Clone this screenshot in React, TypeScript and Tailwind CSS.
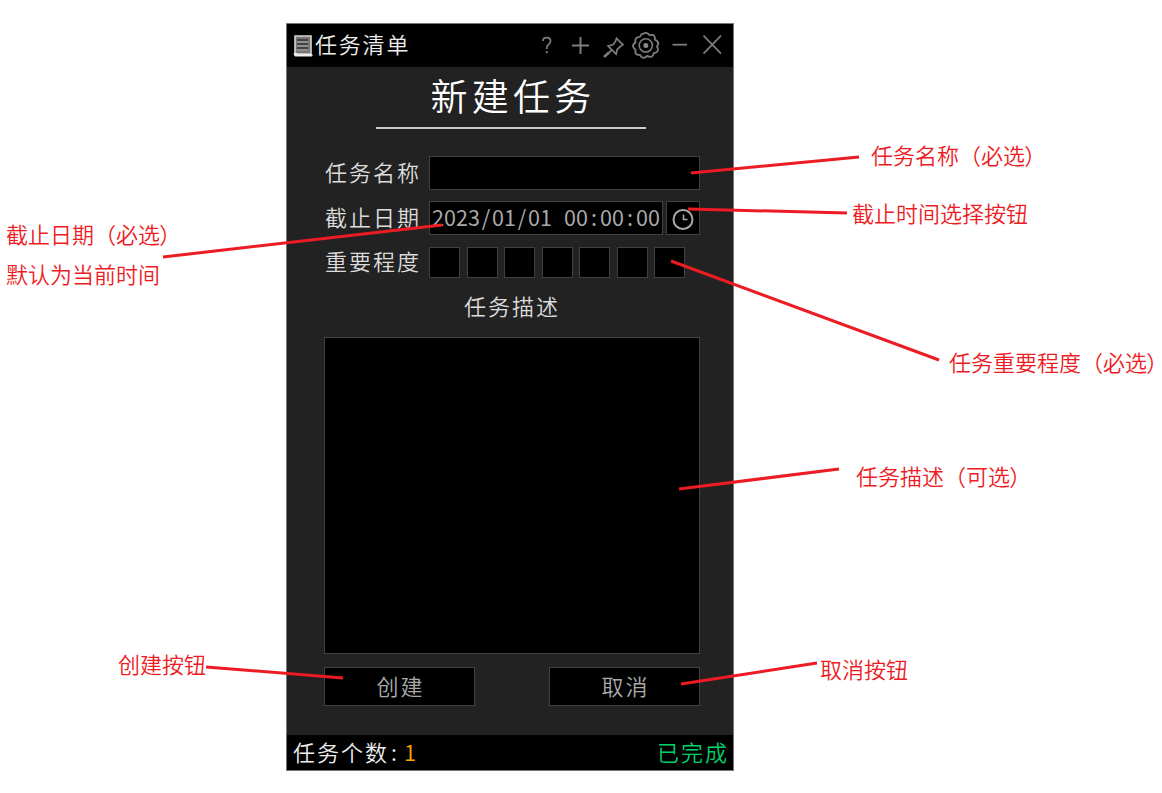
import type { ReactNode } from 'react';

const field = 'border border-[#414141] bg-black';
const label = "text-[22px] leading-[34px] tracking-[2px] text-[#dcdcdc] whitespace-nowrap";

function Row({ text, children, className }: { text: string; children: ReactNode; className: string }) {
  return (
    <div className={`flex items-center ${className}`}>
      <span className={`w-[104px] shrink-0 -mt-[5px] ml-px ${label}`}>{text}</span>
      {children}
    </div>
  );
}

function Note({ text, closing = false, className }: { text: string; closing?: boolean; className: string }) {
  return (
    <div className={`absolute flex whitespace-nowrap text-[22px] leading-8 text-[#ed1c24] ${className}`}>
      <span>{text}</span>
      {closing && <span className="[font-feature-settings:'palt']">）</span>}
    </div>
  );
}

function NotepadIcon() {
  return (
    <svg width="20" height="22" viewBox="0 0 20 22">
      <path d="M2 1h16v18H2z" fill="#777" stroke="#d8d5ce" strokeWidth="1.6" />
      <path d="M4 5h11M4 9h11M4 13h11" stroke="#333" strokeWidth="1.3" />
      <path d="M4 7h11M4 11h11M4 15h11" stroke="#aaa" strokeWidth="1.2" />
      <path d="M1 18.5h3l1 1h14v1.5H2z" fill="#eee" stroke="#eee" />
    </svg>
  );
}

function TitleIcons() {
  return (
    <svg width="190" height="32" viewBox="538 30 190 32" fill="none" stroke="#7d7d7d" strokeWidth="1.7">
      <path d="M543 41c0-2.4 1.6-3.3 3.6-3.3 2.3 0 4 1.2 4 3.4 0 3.2-3.8 3.1-3.8 6.6v1.2M546.7 51v2.2" />
      <path d="M572 45.5h17M580.5 37v17" strokeWidth="2" />
      <path d="M616.5 38.3l6.4 6.3-2.4 1.7-3.2 3-1.2 4.7-8-8 5-1.2 2.5-3.6z" />
      <path d="M611.8 49.8l-4 4" />
      <path d="M604 57l5-4.6" strokeWidth="2.6" />
      <path
        d="M643.4 33.7Q645.8 32 648.2 33.7Q649.2 35.5 651.3 35Q654.4 34.5 654.9 37.8Q654.5 39.9 656.7 40.7Q659.2 42.6 657.8 45.1Q656.4 46.6 657.8 48.3Q658.7 51.5 655.6 52.6Q653.4 52.5 653.2 54.8Q651.9 57.5 649 56.7Q647.2 55.3 645.8 57Q643.1 58.8 641 56.5Q640.6 54.4 638.4 54.8Q635.3 54.7 635.3 51.5Q636.1 49.5 634.2 48.5Q632 46 634 43.6Q636 42.8 635.3 40.8Q635.3 37.7 638.4 37.2Q640.5 37.4 640.9 35.2Q641.7 33.5 643.4 33.7Z"
        strokeWidth="1.8"
      />
      <circle cx="645.8" cy="45.4" r="6.6" strokeWidth="1.6" />
      <circle cx="645.8" cy="45.4" r="2.5" fill="#8a8a8a" stroke="none" />
      <path d="M672.5 44.7h14.5" strokeWidth="1.8" />
      <path d="M703.5 35.7l17.5 18M721 35.7l-17.5 18" />
    </svg>
  );
}

export default function App() {
  return (
    <div className="relative flex h-[793px] w-[1162px] overflow-hidden bg-white pl-[286px] pt-[23px] font-['Noto_Sans_CJK_SC',sans-serif] font-[350]">
      <main className="flex h-[748px] w-[448px] flex-col border border-[#777] bg-[#222]">
        <header className="flex h-[43px] shrink-0 items-center justify-between bg-black pl-[6px] pr-[5px]">
          <div className="flex items-center">
            <NotepadIcon />
            <span className="-mt-[5px] ml-[2px] text-[22px] leading-8 tracking-[1.8px] text-[#eee]">任务清单</span>
          </div>
          <TitleIcons />
        </header>

        <section className="flex grow flex-col pl-[37px] pr-[33px]">
          <h1 className="ml-[52px] flex h-[62px] w-[270px] justify-center border-b-2 border-[#ccc] pl-[4px] text-[37px] font-[350] leading-[56px] tracking-[4.2px] text-white">
            新建任务
          </h1>
          <Row text="任务名称" className="mt-[27px] h-[34px]">
            <div className={`h-[34px] w-[271px] ${field}`} />
          </Row>
          <Row text="截止日期" className="mt-[11px] h-[34px]">
            <div className={`flex h-[34px] w-[234px] items-center pb-[2px] pl-[2px] text-[21.5px] font-normal leading-8 text-[#aaa] ${field}`}>
              {Array.from('2023/01/01 00:00:00').map((character, index) => (
                <span key={index} className="w-3 shrink-0 whitespace-pre text-center">{character}</span>
              ))}
            </div>
            <div className={`ml-[3px] flex h-[34px] w-[34px] items-center justify-center ${field}`}>
              <svg width="24" height="24" viewBox="0 0 24 24" fill="none" stroke="#aaa" strokeWidth="2">
                <circle cx="12" cy="13.5" r="9.5" />
                <path d="M12.5 8.5v5h4" strokeWidth="1.6" />
              </svg>
            </div>
          </Row>
          <Row text="重要程度" className="mt-[12px] h-[31px]">
            <div className="flex gap-[6.5px]">
              {[1, 2, 3, 4, 5, 6, 7].map((level) => (
                <div key={level} className={`h-[31px] w-[31px] ${field}`} />
              ))}
            </div>
          </Row>
          <div className={`mt-[10px] text-center ${label}`}>任务描述</div>
          <div className={`mt-[15px] h-[317px] w-[376px] shrink-0 ${field}`} />
          <div className="mt-[13px] flex w-[376px] justify-between">
            {['创建', '取消'].map((action) => (
              <button key={action} className={`h-[39px] w-[151px] pb-1 pl-[2px] text-[22px] leading-8 tracking-[2px] text-[#aaa] ${field}`}>
                {action}
              </button>
            ))}
          </div>
        </section>

        <footer className="flex h-[35px] shrink-0 items-center justify-between bg-black pb-[3px] pl-[6px] pr-[4px] text-[22px] leading-8 tracking-[2px]">
          <div className="flex text-[#eee]">
            <span className="w-[98px]">任务个数</span>
            <span className="w-[13px]">:</span>
            <span className="text-[#ffa500]">1</span>
          </div>
          <span className="text-[#00d26a]">已完成</span>
        </footer>
      </main>

      <svg className="absolute inset-0" width="1162" height="793" fill="none" stroke="#ed1c24" strokeWidth="3">
        <path d="M691 173L859 157M688 209L847 213M163 257L442 225M671 261L939 360M679 489L839 469M206 667L343 678M681 684L817 663" />
      </svg>
      <Note text="任务名称（必选" closing className="left-[871px] top-[138px]" />
      <Note text="截止时间选择按钮" className="left-[852px] top-[196px]" />
      <Note text="截止日期（必选" closing className="left-[6px] top-[217px]" />
      <Note text="默认为当前时间" className="left-[6px] top-[257px]" />
      <Note text="任务重要程度（必选" closing className="left-[949px] top-[345px]" />
      <Note text="任务描述（可选" closing className="left-[856px] top-[459px]" />
      <Note text="创建按钮" className="left-[118px] top-[647px]" />
      <Note text="取消按钮" className="left-[820px] top-[652px]" />
    </div>
  );
}
